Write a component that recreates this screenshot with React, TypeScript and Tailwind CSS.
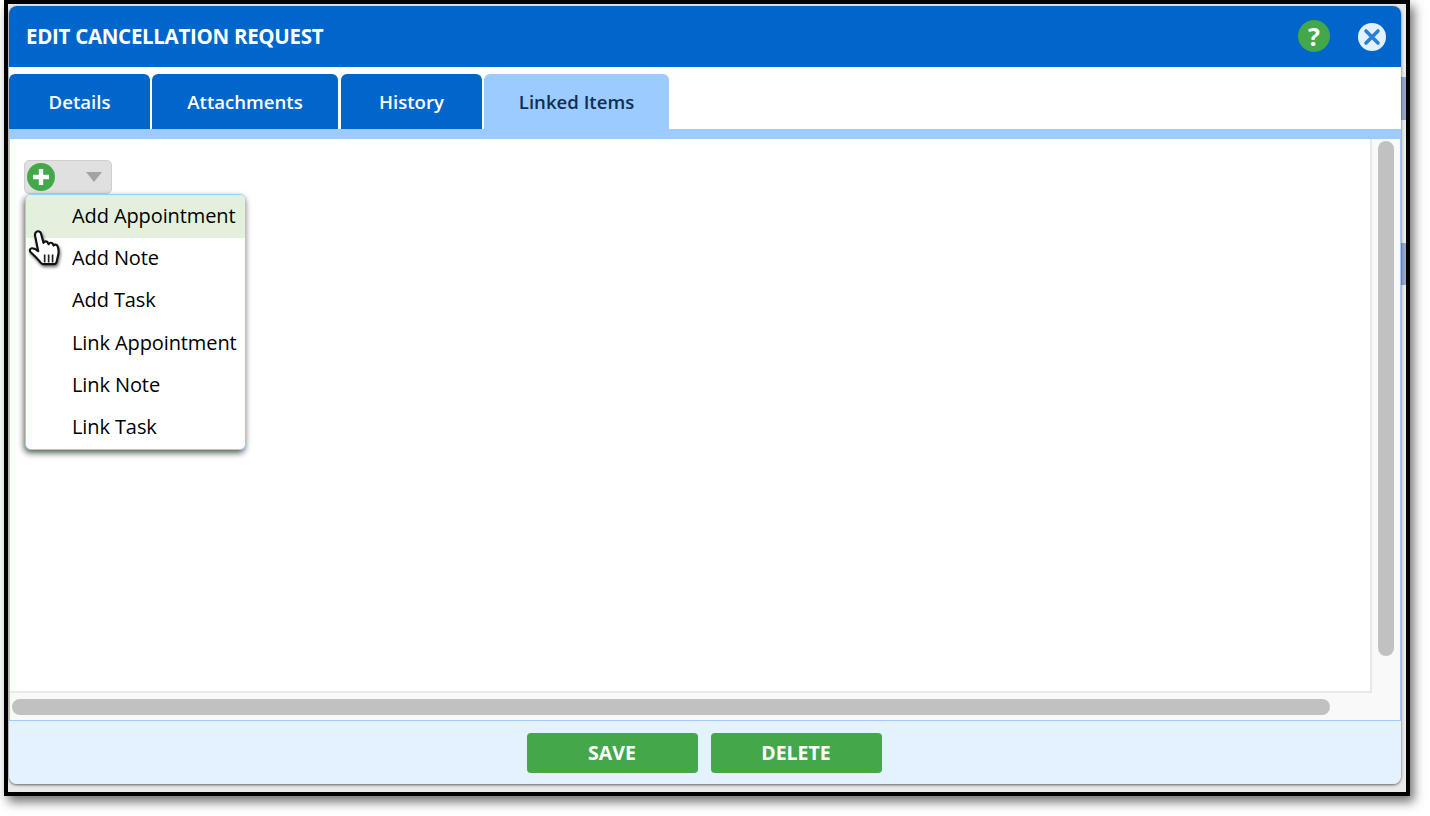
import React from "react";

const font = { fontFamily: '"Open Sans", "Noto Sans", sans-serif' };

function Cursor() {
  return (
    <svg className="absolute left-[18px] top-[89px] h-[43px] w-[39px]" viewBox="0 0 34 38" style={{ filter: "drop-shadow(1px 2px 1.5px rgba(0,0,0,0.55))" }}>
      <path
        d="M7 3.5c1.6-1.3 3.8-.5 4.3 1.5l2.2 8.2c.2-1.7 3-2 3.8-.2l.7 1.3c.3-1.6 3-1.8 3.8-.1l.6 1.3c.6-1.2 2.9-1 3.5.5 1 2.6 1.2 5.6.4 8.6l-1.3 5.4c-.3 1.2-1.2 1.9-2.4 1.9h-9.2c-1.1 0-2-.5-2.6-1.4-2.4-3.2-5.6-6.2-8.6-9-1.4-1.4-.8-3.4 1-3.6 1.8-.2 3.6.9 5.6 2.6L6.1 7.2C5.8 5.8 6 4.4 7 3.5z"
        fill="#fff"
        stroke="#111"
        strokeWidth="1.9"
        strokeLinejoin="round"
      />
      <path d="M14.5 23.5v7M18 23.5v7M21.5 23.5v7" stroke="#222" strokeWidth="1.5" fill="none" />
    </svg>
  );
}

const items = ["Add Appointment", "Add Note", "Add Task", "Link Appointment", "Link Note", "Link Task"];

export default function App() {
  return (
    <div className="h-[816px] w-[1430px] overflow-hidden bg-white pl-[4px]" style={font}>
      <div className="relative h-[796px] w-[1406px] border-[4px] border-black bg-[#e9e9e9] pb-[8px] pl-[1px] pr-[5px] pt-[2px] shadow-[4px_6px_10px_rgba(0,0,0,0.55)]">
        <div className="absolute right-0 top-[73px] h-[43px] w-[5px] bg-[#8fa5c9]" />
        <div className="absolute right-0 top-[239px] h-[42px] w-[5px] bg-[#8fa5c9]" />

        <div className="relative flex h-full flex-col rounded-[8px] shadow-[0_1px_3px_rgba(0,0,0,0.6)]">
          <header className="flex h-[61px] shrink-0 items-center justify-between rounded-t-[8px] bg-[#0066cc] pl-[17px] pr-[15px]">
            <h1 className="text-[20.5px] font-bold leading-none tracking-[-0.3px] text-white">EDIT CANCELLATION REQUEST</h1>
            <div className="flex items-center gap-[28px]">
              <div className="-mt-[1px] flex h-[32px] w-[32px] items-center justify-center rounded-full bg-[#44a84a] text-[25px] font-bold leading-none text-white">?</div>
              <div className="flex h-[28px] w-[28px] items-center justify-center rounded-full bg-[#e4f1fe]">
                <svg viewBox="0 0 28 28" className="h-[28px] w-[28px]">
                  <path d="M8 8l12 12M20 8L8 20" stroke="#2a7fd6" strokeWidth="3.6" strokeLinecap="round" />
                </svg>
              </div>
            </div>
          </header>

          <nav className="flex h-[62px] shrink-0 items-end gap-[2px] bg-white">
            <div className="flex h-[55px] w-[141px] items-center justify-center rounded-t-[6px] bg-[#0066cc] pt-[1px] text-[18.6px] font-semibold text-white">Details</div>
            <div className="flex h-[55px] w-[186px] items-center justify-center rounded-t-[6px] bg-[#0066cc] pt-[1px] text-[18.6px] font-semibold text-white">Attachments</div>
            <div className="ml-[1px] flex h-[55px] w-[141px] items-center justify-center rounded-t-[6px] bg-[#0066cc] pt-[1px] text-[18.6px] font-semibold text-white">History</div>
            <div className="flex h-[55px] w-[185px] items-center justify-center rounded-t-[6px] bg-[#9ccbff] pt-[1px] text-[18.6px] font-semibold text-[#0f2f55]">Linked Items</div>
          </nav>
          <div className="h-[10px] shrink-0 bg-[#9ccbff]" />

          <div className="relative grid min-h-0 flex-1 grid-cols-[1fr_28px] grid-rows-[1fr_27px] border-x border-b border-[#9ccbff] bg-[#f9f9f9]">
            <div className="relative border-b-2 border-r-2 border-[#e8e8e8] bg-white pl-[14px] pt-[21px]">
              <div className="flex h-[34px] w-[88px] items-center rounded-[5px] border border-[#cfcfcf] bg-[#e0e0e0] pl-[2px]">
                <div className="flex h-[28px] w-[28px] items-center justify-center rounded-full bg-[#44a84a]">
                  <svg viewBox="0 0 28 28" className="h-[28px] w-[28px]">
                    <path d="M14 6v16M6 14h16" stroke="#fff" strokeWidth="4.4" />
                  </svg>
                </div>
                <svg viewBox="0 0 16 10" className="ml-[31px] h-[10px] w-[16px]">
                  <path d="M0 0h16L8 10z" fill="#a3a3a3" />
                </svg>
              </div>

              <div className="absolute left-[15px] top-[54.5px] w-[221px] overflow-hidden rounded-[6px] border border-[#9ccbff] bg-white shadow-[-1px_3px_6px_rgba(0,0,0,0.65)]">
                {items.map((it, i) => (
                  <div key={it} className={`flex items-center pb-[1px] pl-[46px] text-[20px] tracking-[-0.1px] text-black ${i === 0 ? "h-[43px] bg-[#e3f0dd]" : "h-[42.3px]"}`}>
                    {it}
                  </div>
                ))}
              </div>
              <Cursor />
            </div>

            <div className="pl-[6px] pt-[2px]">
              <div className="h-[515px] w-[16px] rounded-full bg-[#c1c1c1]" />
            </div>
            <div className="pl-[2px] pt-[6px]">
              <div className="h-[16px] w-[1318px] rounded-full bg-[#c1c1c1]" />
            </div>
            <div />
          </div>

          <footer className="flex h-[63px] shrink-0 items-center justify-center gap-[13px] rounded-b-[8px] bg-[#e4f1fe] pr-[2px]">
            <button className="h-[40px] w-[171px] rounded-[4px] bg-[#44a84a] text-[19.5px] font-bold text-white">SAVE</button>
            <button className="h-[40px] w-[171px] rounded-[4px] bg-[#44a84a] text-[19.5px] font-bold text-white">DELETE</button>
          </footer>
        </div>
      </div>
    </div>
  );
}
